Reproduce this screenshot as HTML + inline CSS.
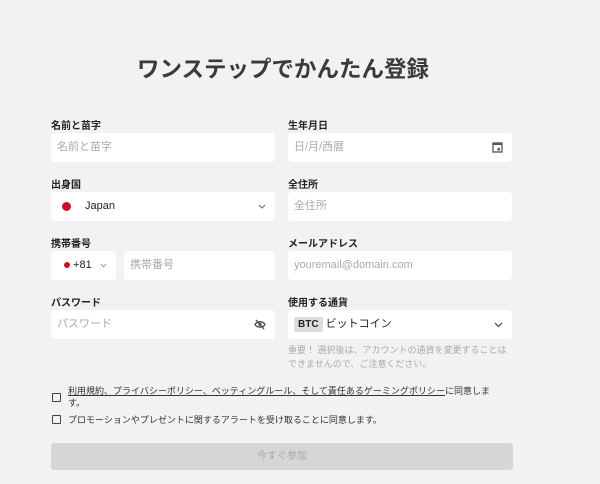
<!DOCTYPE html>
<html><head><meta charset="utf-8"><style>
*{box-sizing:border-box;margin:0;padding:0}
body{width:600px;height:484px;background:#f2f2f2;font-family:"Liberation Sans","Noto Sans CJK JP",sans-serif;position:relative;overflow:hidden;color:#222}
.t{position:absolute;left:-17px;width:600px;top:52px;text-align:center;font-size:22.5px;font-weight:bold;color:#3a3a3a}
.l{position:absolute;font-size:10px;font-weight:bold;color:#222}
.i{position:absolute;background:#fff;border-radius:4px;height:29px;font-size:11px;color:#aaa;line-height:29px;padding-left:6px}
.dot{display:inline-block;width:9px;height:9px;border-radius:50%;background:#c8102e;vertical-align:middle}
.cb{position:absolute;width:9px;height:9px;border:1.3px solid #444;border-radius:1px}
.s{position:absolute;font-size:9px;color:#333}
</style></head><body>
<div class="t">ワンステップでかんたん登録</div>

<div class="l" style="left:51px;top:117px">名前と苗字</div>
<div class="i" style="left:51px;top:133px;width:224px">名前と苗字</div>
<div class="l" style="left:288px;top:117px">生年月日</div>
<div class="i" style="left:288px;top:133px;width:224px">日/月/西暦
<svg style="position:absolute;right:9px;top:8px" width="11" height="12" viewBox="0 0 11 12"><rect x="1" y="2" width="9" height="9" fill="none" stroke="#555" stroke-width="1.3"/><rect x="1" y="2" width="9" height="2" fill="#555"/><rect x="5.5" y="7" width="2.5" height="2.5" fill="#555"/></svg></div>

<div class="l" style="left:51px;top:176px">出身国</div>
<div class="i" style="left:51px;top:192px;width:224px;color:#222;padding-left:11px"><span class="dot"></span><span style="margin-left:14px">Japan</span>
<svg style="position:absolute;right:9px;top:12px" width="8" height="5" viewBox="0 0 8 5"><path d="M1 1l3 3 3-3" fill="none" stroke="#666" stroke-width="1"/></svg></div>
<div class="l" style="left:288px;top:176px">全住所</div>
<div class="i" style="left:288px;top:192px;width:224px">全住所</div>

<div class="l" style="left:51px;top:235px">携帯番号</div>
<div class="i" style="left:51px;top:251px;width:65px;color:#222;padding-left:13px"><span class="dot" style="width:6px;height:6px"></span> +81
<svg style="position:absolute;right:9px;top:12px" width="7" height="5" viewBox="0 0 8 5"><path d="M1 1l3 3 3-3" fill="none" stroke="#888" stroke-width="1"/></svg></div>
<div class="i" style="left:124px;top:251px;width:151px">携帯番号</div>
<div class="l" style="left:288px;top:235px">メールアドレス</div>
<div class="i" style="left:288px;top:251px;width:224px">youremail@domain.com</div>

<div class="l" style="left:51px;top:294px">パスワード</div>
<div class="i" style="left:51px;top:310px;width:224px">パスワード
<svg style="position:absolute;right:9px;top:9px" width="12" height="11" viewBox="0 0 12 11"><path d="M1 5.5C3 2 9 2 11 5.5 9 9 3 9 1 5.5z" fill="none" stroke="#555" stroke-width="1.4"/><circle cx="6" cy="5.5" r="1.6" fill="#555"/><path d="M2 1l8 9" stroke="#555" stroke-width="1.4"/></svg></div>
<div class="l" style="left:288px;top:294px">使用する通貨</div>
<div class="i" style="left:288px;top:310px;width:224px;color:#222;padding-left:6px"><span style="background:#ddd;font-weight:bold;font-size:10px;padding:2px 4px;border-radius:2px">BTC</span> ビットコイン
<svg style="position:absolute;right:9px;top:12px" width="9" height="6" viewBox="0 0 9 6"><path d="M1 1l3.5 3.5L8 1" fill="none" stroke="#555" stroke-width="1.3"/></svg></div>
<div class="s" style="left:288px;top:343px;color:#aaa;font-size:9px;line-height:14px;width:235px">重要！ 選択後は、アカウントの通貨を変更することは<br>できませんので、ご注意ください。</div>

<div class="cb" style="left:52px;top:393px"></div>
<div class="s" style="left:68px;top:385px;line-height:12px;width:450px"><u>利用規約、プライバシーポリシー、ベッティングルール、そして責任あるゲーミングポリシー</u>に同意しま<br>す。</div>
<div class="cb" style="left:52px;top:415px"></div>
<div class="s" style="left:68px;top:413px">プロモーションやプレゼントに関するアラートを受け取ることに同意します。</div>

<div style="position:absolute;left:51px;top:443px;width:462px;height:27px;background:#d6d6d6;border-radius:3px;text-align:center;line-height:27px;font-size:10px;color:#aaa">今すぐ参加</div>
</body></html>
